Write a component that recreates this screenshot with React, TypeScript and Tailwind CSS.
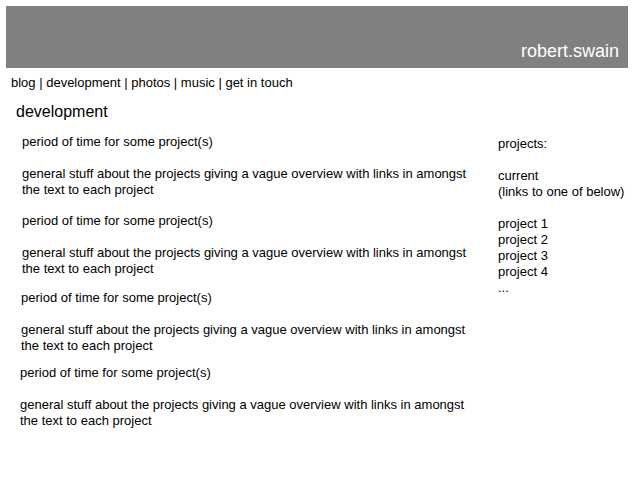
export default function App() {
  const blocks = [
    { ml: "ml-[22px]", mt: "mt-0" },
    { ml: "ml-[22px]", mt: "mt-[15px]" },
    { ml: "ml-[21px]", mt: "mt-[13px]" },
    { ml: "ml-[20px]", mt: "mt-[11px]" },
  ];
  return (
    <div className="w-[640px] h-[480px] bg-white text-black font-['Liberation_Sans',Arial,sans-serif] text-[13px] leading-[16px] overflow-hidden">
      <div className="ml-[6px] mt-[6px] w-[622px] h-[62px] bg-[#808080] flex items-start justify-end pr-[9px] pt-[35px]">
        <span className="text-white text-[18px] leading-[21px]">robert.swain</span>
      </div>
      <div className="ml-[11px] mt-[7px]">blog | development | photos | music | get in touch</div>
      <div className="flex">
        <div className="w-[487px]">
          <div className="ml-[16px] mt-[11px] text-[16px] leading-[19px]">development</div>
          <div className="mt-[13px]">
            {blocks.map((b, i) => (
              <div key={i} className={`${b.ml} ${b.mt} w-[445px]`}>
                <div>period of time for some project(s)</div>
                <div className="mt-[16px]">
                  general stuff about the projects giving a vague overview with links in amongst the text to each project
                </div>
              </div>
            ))}
          </div>
        </div>
        <div className="ml-[11px] mt-[45px]">
          <div>projects:</div>
          <div className="mt-[16px]">current</div>
          <div>(links to one of below)</div>
          <div className="mt-[16px]">project 1</div>
          <div>project 2</div>
          <div>project 3</div>
          <div>project 4</div>
          <div>...</div>
        </div>
      </div>
    </div>
  );
}
